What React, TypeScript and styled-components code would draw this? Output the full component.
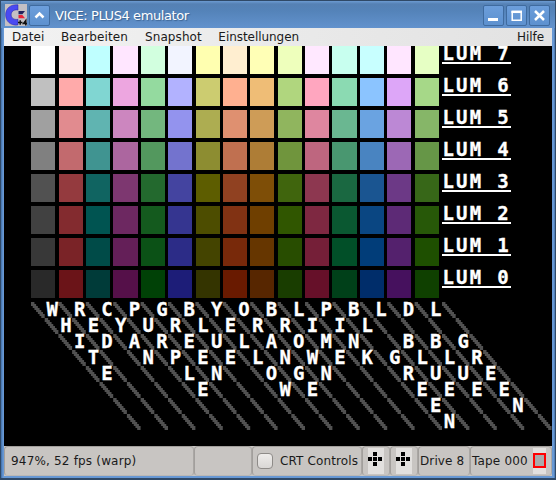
import React from "react";
import styled, { createGlobalStyle } from "styled-components";

const Global = createGlobalStyle`
  * { box-sizing: border-box; }
  body { margin: 0; background: #304a6b; overflow: hidden; }
`;

const Frame = styled.div`
  width: 556px;
  height: 480px;
  display: flex;
  flex-direction: column;
  padding: 1px 1px 2px 1px;
  background: #2f4967;
  font-family: "DejaVu Sans", sans-serif;
  font-size: 12px;
  letter-spacing: 0.12px;
  color: #1a1a1a;
`;

const Body = styled.div`
  flex: 1;
  min-height: 0;
  display: flex;
  flex-direction: column;
  padding: 0 3px 2px 3px;
  background: linear-gradient(90deg, #3f6ea8 0, #6798d4 2px, #6798d4 calc(100% - 1px), #3d679b 100%);
`;

const TitleBar = styled.header`
  height: 27px;
  flex: none;
  display: flex;
  align-items: center;
  margin: 0 -3px;
  padding: 1px 5px 0 4px;
  background: linear-gradient(#6c9bd2 0, #5581b4 3px, #5483b9 10px, #6292cd 100%);
`;

const Title = styled.h1`
  flex: 1;
  margin: 0 0 0 5px;
  font: 400 13px "DejaVu Sans", sans-serif;
  letter-spacing: -0.42px;
  color: #fff;
  text-shadow: 1px 1px 1px #3c6392;
`;

const TitleButton = styled.button`
  width: 21px;
  height: 21px;
  margin-left: 2px;
  padding: 0;
  display: grid;
  place-items: center;
  border: 1px solid #3f6b9f;
  border-radius: 2px;
  background: linear-gradient(#6c9edb, #5d91cf);
`;

const MenuBar = styled.nav`
  height: 18px;
  flex: none;
  display: flex;
  align-items: center;
  padding: 0 8px 1px 8px;
  background: linear-gradient(100deg, #f2f2f2, #e2e2e2);
`;

const MenuItem = styled.span<{ $gap?: number; $spacing?: number }>`
  margin-right: ${(p) => p.$gap ?? 0}px;
  letter-spacing: ${(p) => p.$spacing ?? 0.1}px;
  white-space: nowrap;
  &:last-child { margin-left: auto; }
`;

const Screen = styled.main`
  height: 400px;
  flex: none;
  padding-left: 27.25px;
  background: #000;
  overflow: hidden;
`;

const PaletteRow = styled.div`
  display: flex;
  height: 32px;
`;

const Swatch = styled.div<{ $color: string }>`
  width: 24.2px;
  height: 28px;
  flex: none;
  margin-right: 3.2px;
  background: ${(p) => p.$color};
`;

const ScreenText = styled.div`
  font: 700 19px/16px "DejaVu Sans Mono", monospace;
  letter-spacing: 2.26px;
  color: #fff;
  -webkit-text-stroke: 0.3px #fff;
  white-space: pre;
`;

const LumLabel = styled(ScreenText)`
  width: 69px;
  height: 18px;
  line-height: 14px;
  border-bottom: 2px solid #fff;
  padding-left: 0.5px;
`;

const NameArea = styled.div`
  display: grid;
  width: 525px;
  height: 128px;
  > * { grid-area: 1 / 1; }
`;

const NameText = styled.div`
  margin: -1px 0 0 1.6px;
`;

const StatusBar = styled.footer`
  flex: 1;
  display: flex;
  background: #c8c5c2;
`;

const Cell = styled.div<{ $w: number; $pad?: number }>`
  width: ${(p) => p.$w}px;
  flex: none;
  display: flex;
  align-items: center;
  padding-left: ${(p) => p.$pad ?? 1}px;
  border: 1px solid #a29f9c;
  border-right-color: #aaa7a4;
  border-radius: 4px;
  border-bottom-color: #bbb8b5;
  white-space: nowrap;
`;

const CheckBox = styled.span`
  width: 16px;
  height: 16px;
  margin-right: 7px;
  border: 1px solid #8e8b88;
  border-radius: 4px;
  background: linear-gradient(#eeecea, #d9d7d5);
`;

const Joystick = styled.span`
  width: 16px;
  height: 26px;
  display: grid;
  background: #e2e0de;
`;

const TapeLight = styled.span`
  width: 13px;
  height: 26px;
  margin-left: auto;
  margin-right: 5px;
  padding-bottom: 2px;
  display: flex;
  align-items: center;
  background: #e2e0de;
  &::before {
    content: "";
    width: 13px;
    height: 11px;
    border: 2px solid #f00;
    background: #aaa;
  }
`;

const Status = styled.span`
  letter-spacing: 0.18px;
`;

const palette = [
  "ffffff ffeaea bfffff ffe6ff d2ffdf f2f4ff ffffb0 ffeed0 ffffb6 eeffbc ffe8ff c8ffef c8ffff ffe6ff e6ffc4",
  "c0c0c0 ffaaaa 80d6d2 eda6e0 94da9f b2b2ff cccc70 ffb090 efbd76 b0d67e ffa6bf 8bdab2 8bc4ff dda6f8 a6d888",
  "a0a0a0 e18b8f 60b4b1 cc86bf 73b77e 9393ee adad51 df9070 ce9c57 90b55e de869f 6ab791 6aa3e1 bc88d5 86b668",
  "808080 c26a6e 409491 ac669f 53985e 7373ce 8d8d31 c07050 ae7d36 70953d be667f 499770 4984c1 9c68b5 669647",
  "515151 943a3e 106461 7d3770 23692e 4444a0 5d5d00 904121 7e4e07 40650d 8d3750 1a6841 1a5591 6c3986 376718",
  "414141 832b2f 005451 6d2861 145a1e 353590 4d4d00 813213 6f3f00 305600 7e2841 0a5831 0a4682 5d2a76 275808",
  "383838 7a2327 004b48 641f58 0b5116 2c2c87 444400 78290a 663600 284d00 751f38 014f28 013d79 54216d 1e4f00",
  "292929 6b1418 003b39 551049 004106 1d1d78 343400 691a00 572600 193d00 661029 004019 002d6a 46115e 0f4000",
].map((r) => r.split(" ").map((c) => "#" + c));

const names = [
  "WHITE", "RED", "CYAN", "PURPLE", "GREEN", "BLUE", "YELLOW", "ORANGE",
  "BROWN", "LIME", "PINK", "BL GREEN", "L BLUE", "D BLUE", "L GREEN",
];

// Each name runs diagonally: one character per row, one column further right.
const nameRows = Array.from({ length: 8 }, (_, row) => {
  const line = Array<string>(38).fill(" ");
  names.forEach((name, i) => {
    if (name[row]) line[1 + 2 * i + row] = name[row];
  });
  return line.join("").trimEnd();
});

const PX = 13.7 / 8;
const spans = [[0, 2], [0, 3], [1, 3], [2, 3], [3, 3], [4, 3], [5, 3], [6, 2]];

function Diagonals() {
  const parts: string[] = [];
  for (let k = 0; k < 16; k++)
    for (let r = 0; r < 8; r++)
      spans.forEach(([x, w], y) => {
        parts.push(`M${((2 * k + r) * 8 + x) * PX} ${r * 16 + y * 2}h${w * PX}v2h${-w * PX}z`);
      });
  return (
    <svg width="525" height="128">
      <path d={parts.join("")} fill="#515151" />
    </svg>
  );
}

function Stick() {
  return (
    <Joystick>
      <svg width="16" height="26" shapeRendering="crispEdges">
        <path d="M5 4h4v4h-4zM0 9h4v4h-4zM5 9h4v4h-4zM10 9h4v4h-4zM5 14h4v4h-4z" />
      </svg>
    </Joystick>
  );
}

function Logo() {
  return (
    <svg width="22" height="22" viewBox="0 0 22 22">
      <path fill="#c4c0c4" d="M0 0h22v22H0z" />
      <path fill="#4a4af2" stroke="#272799" strokeWidth=".5" d="M13 .8v5.3C8.7 5.2 6.2 7.5 6.2 10.7s2.6 5.3 6.8 4.6V21C5.5 22 .6 17.2.6 10.8S5.7 0 13 .8z" />
      <path fill="#22225c" d="M13.5 7H20l-2.6 3.2h-3.9z" />
      <path fill="#e82338" d="M13.5 11h3.9l2.6 3.2h-6.5z" />
      <path stroke="#111" strokeWidth="1.5" fill="none" d="M13 18.5h4.5M15.2 16.2v4.6M20.8 21.5v-5l-2.3 3H22" />
    </svg>
  );
}

export default function App() {
  return (
    <>
      <Global />
      <Frame>
        <Body>
          <TitleBar>
            <Logo />
            <TitleButton>
              <svg width="11" height="9" fill="none" stroke="#fff" strokeWidth="2.5">
                <path d="M1.5 6.5l4-4 4 4" />
              </svg>
            </TitleButton>
            <Title>VICE: PLUS4 emulator</Title>
            <TitleButton>
              <svg width="11" height="11"><path fill="#fff" d="M0 8h10v3H0z" /></svg>
            </TitleButton>
            <TitleButton>
              <svg width="11" height="11" fill="none" stroke="#fff">
                <path strokeWidth="1.5" d="M1.2 1v9.2h9V1" /><path strokeWidth="2.5" d="M.5 1.8H11" />
              </svg>
            </TitleButton>
            <TitleButton>
              <svg width="11" height="11" stroke="#fff" strokeWidth="2.5"><path d="M1 1l9 9M10 1l-9 9" /></svg>
            </TitleButton>
          </TitleBar>
          <MenuBar>
            <MenuItem $gap={16.5}>Datei</MenuItem>
            <MenuItem $gap={17}>Bearbeiten</MenuItem>
            <MenuItem $gap={16.5}>Snapshot</MenuItem>
            <MenuItem $spacing={-0.05}>Einstellungen</MenuItem>
            <MenuItem $spacing={-0.05}>Hilfe</MenuItem>
          </MenuBar>
          <Screen>
            {palette.map((row, i) => (
              <PaletteRow key={i}>
                {row.map((color, j) => <Swatch key={j} $color={color} />)}
                <LumLabel>{`LUM ${7 - i}`}</LumLabel>
              </PaletteRow>
            ))}
            <NameArea>
              <Diagonals />
              <NameText>
                {nameRows.map((line, i) => <ScreenText key={i}>{line}</ScreenText>)}
              </NameText>
            </NameArea>
          </Screen>
          <StatusBar>
            <Cell $w={190} $pad={6}><Status>947%, 52 fps (warp)</Status></Cell>
            <Cell $w={58} />
            <Cell $w={110} $pad={4}><CheckBox />CRT Controls</Cell>
            <Cell $w={28} $pad={5}><Stick /></Cell>
            <Cell $w={28} $pad={5}><Stick /></Cell>
            <Cell $w={52}>Drive 8</Cell>
            <Cell $w={82}><Status>Tape 000</Status><TapeLight /></Cell>
          </StatusBar>
        </Body>
      </Frame>
    </>
  );
}
